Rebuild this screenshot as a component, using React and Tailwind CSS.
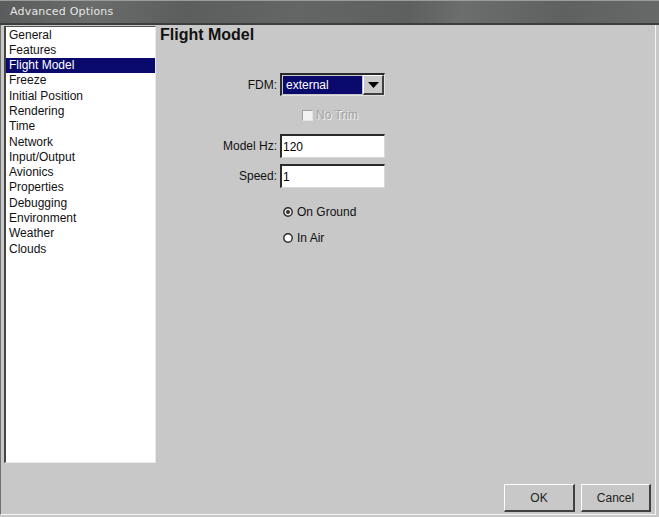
const sections = [
  "General",
  "Features",
  "Flight Model",
  "Freeze",
  "Initial Position",
  "Rendering",
  "Time",
  "Network",
  "Input/Output",
  "Avionics",
  "Properties",
  "Debugging",
  "Environment",
  "Weather",
  "Clouds",
];

function TitleBar() {
  return (
    <div className="h-[25px] shrink-0 flex items-center pl-[10px] border-t border-t-[#9a9c9c] border-b-2 border-b-[#3c3e3e] bg-[linear-gradient(100deg,#5a5c5c_0%,#6a6c6c_14%,#5c5e5e_28%,#646666_45%,#5e6060_62%,#6c6e6e_70%,#5f6161_85%,#676969_100%)]">
      <span className="text-[11px] text-[#e6e6e6] tracking-[0.2px] font-['DejaVu_Sans',sans-serif]">
        Advanced Options
      </span>
    </div>
  );
}

function SectionList({ selected }) {
  return (
    <div className="w-[152px] h-[437px] ml-[3px] bg-white border-t border-l-2 border-t-[#505050] border-l-[#454545] border-r border-b border-r-[#e8e8e8] border-b-[#e8e8e8] pt-[0.5px]">
      {sections.map((s) => (
        <div
          key={s}
          className={`h-[15.3px] leading-[15.3px] pl-[3px] text-[12px] ${
            s === selected ? "bg-[#0a0a6c] text-white" : "text-[#111]"
          }`}
        >
          {s}
        </div>
      ))}
    </div>
  );
}

function TextField({ value }) {
  return (
    <div className="w-[105px] h-[24px] bg-white border-t-2 border-l-2 border-t-[#2a2a2a] border-l-[#2a2a2a] border-r border-b border-r-[#d8d8d8] border-b-[#d8d8d8] flex items-center pl-[1px] text-[12px] text-black">
      {value}
    </div>
  );
}

function Combo({ value }) {
  return (
    <div className="w-[105px] h-[23px] flex border-t-2 border-l-2 border-t-[#2a2a2a] border-l-[#2a2a2a] border-r border-b border-r-[#e0e0e0] border-b-[#e0e0e0] bg-[#c8c8c8]">
      <div className="flex-1 m-[1px] bg-[#0a0a6c] text-white text-[12px] flex items-center pl-[3px]">
        {value}
      </div>
      <div className="w-[21px] border-t border-l border-t-white border-l-white border-r-2 border-b-2 border-r-[#404040] border-b-[#404040] flex items-center justify-center bg-[#cacaca]">
        <svg width="11" height="6" viewBox="0 0 11 6">
          <path d="M0 0 H11 L5.5 6 Z" fill="#000" />
        </svg>
      </div>
    </div>
  );
}

function Radio({ checked, label }) {
  return (
    <div className="h-[20px] flex items-center pl-[3px] text-[12px] text-[#111]">
      <svg width="10" height="10" viewBox="0 0 10 10" className="mr-[4px]">
        <circle cx="5" cy="5" r="4.2" fill={checked ? "#e8e8e8" : "#fff"} stroke="#2a2a2a" strokeWidth="1.4" />
        {checked && <circle cx="5" cy="5" r="2" fill="#333" />}
      </svg>
      {label}
    </div>
  );
}

function Button({ children, w }) {
  return (
    <button
      className={`${w} h-[28px] bg-[#c8c8c8] border-t border-l border-t-white border-l-white border-r-2 border-b-2 border-r-[#404040] border-b-[#404040] text-[12px] text-[#222] flex items-center justify-center`}
    >
      {children}
    </button>
  );
}

function FlightModelPanel() {
  return (
    <div className="flex-1 pl-[4px]">
      <div className="text-[16px] leading-[18px] font-bold text-[#111]">Flight Model</div>
      <div className="mt-[29px] grid grid-cols-[117px_105px] gap-x-[3px] text-[12px] text-[#111]">
        <div className="h-[23px] flex items-center justify-end">FDM:</div>
        <Combo value="external" />

        <div className="h-[22px] mt-[8px] mb-[8px]"></div>
        <div className="h-[22px] mt-[8px] mb-[8px] flex items-center pl-[22px]">
          <span className="w-[11px] h-[11px] bg-[#f2f2f2] border border-t-[#a0a0a0] border-l-[#a0a0a0] border-r-[#e4e4e4] border-b-[#e4e4e4] mr-[3px]"></span>
          <span className="text-[#a4a4a4] [text-shadow:1px_1px_0_#f0f0f0]">No Trim</span>
        </div>

        <div className="h-[24px] flex items-center justify-end">Model Hz:</div>
        <TextField value="120" />

        <div className="h-[24px] mt-[6px] flex items-center justify-end">Speed:</div>
        <div className="mt-[6px]">
          <TextField value="1" />
        </div>

        <div className="mt-[14px]"></div>
        <div className="mt-[14px] flex flex-col gap-[6px]">
          <Radio checked label="On Ground" />
          <Radio label="In Air" />
        </div>
      </div>
    </div>
  );
}

export default function App() {
  return (
    <div className="w-[659px] h-[517px] bg-[#c8c8c8] flex flex-col overflow-hidden font-['Liberation_Sans',Arial,sans-serif]">
      <TitleBar />
      <div className="flex-1 flex flex-col w-[656px] border-l border-l-[#707070] border-r border-r-[#f4f4f4] border-b border-b-[#f4f4f4] mb-[2px]">
        <div className="flex pt-[1px]">
          <SectionList selected="Flight Model" />
          <FlightModelPanel />
        </div>
        <div className="flex-1 flex items-end justify-end gap-[6px] pr-[4px] pb-[2px]">
          <Button w="w-[71px]">OK</Button>
          <Button w="w-[70px]">Cancel</Button>
        </div>
      </div>
    </div>
  );
}
